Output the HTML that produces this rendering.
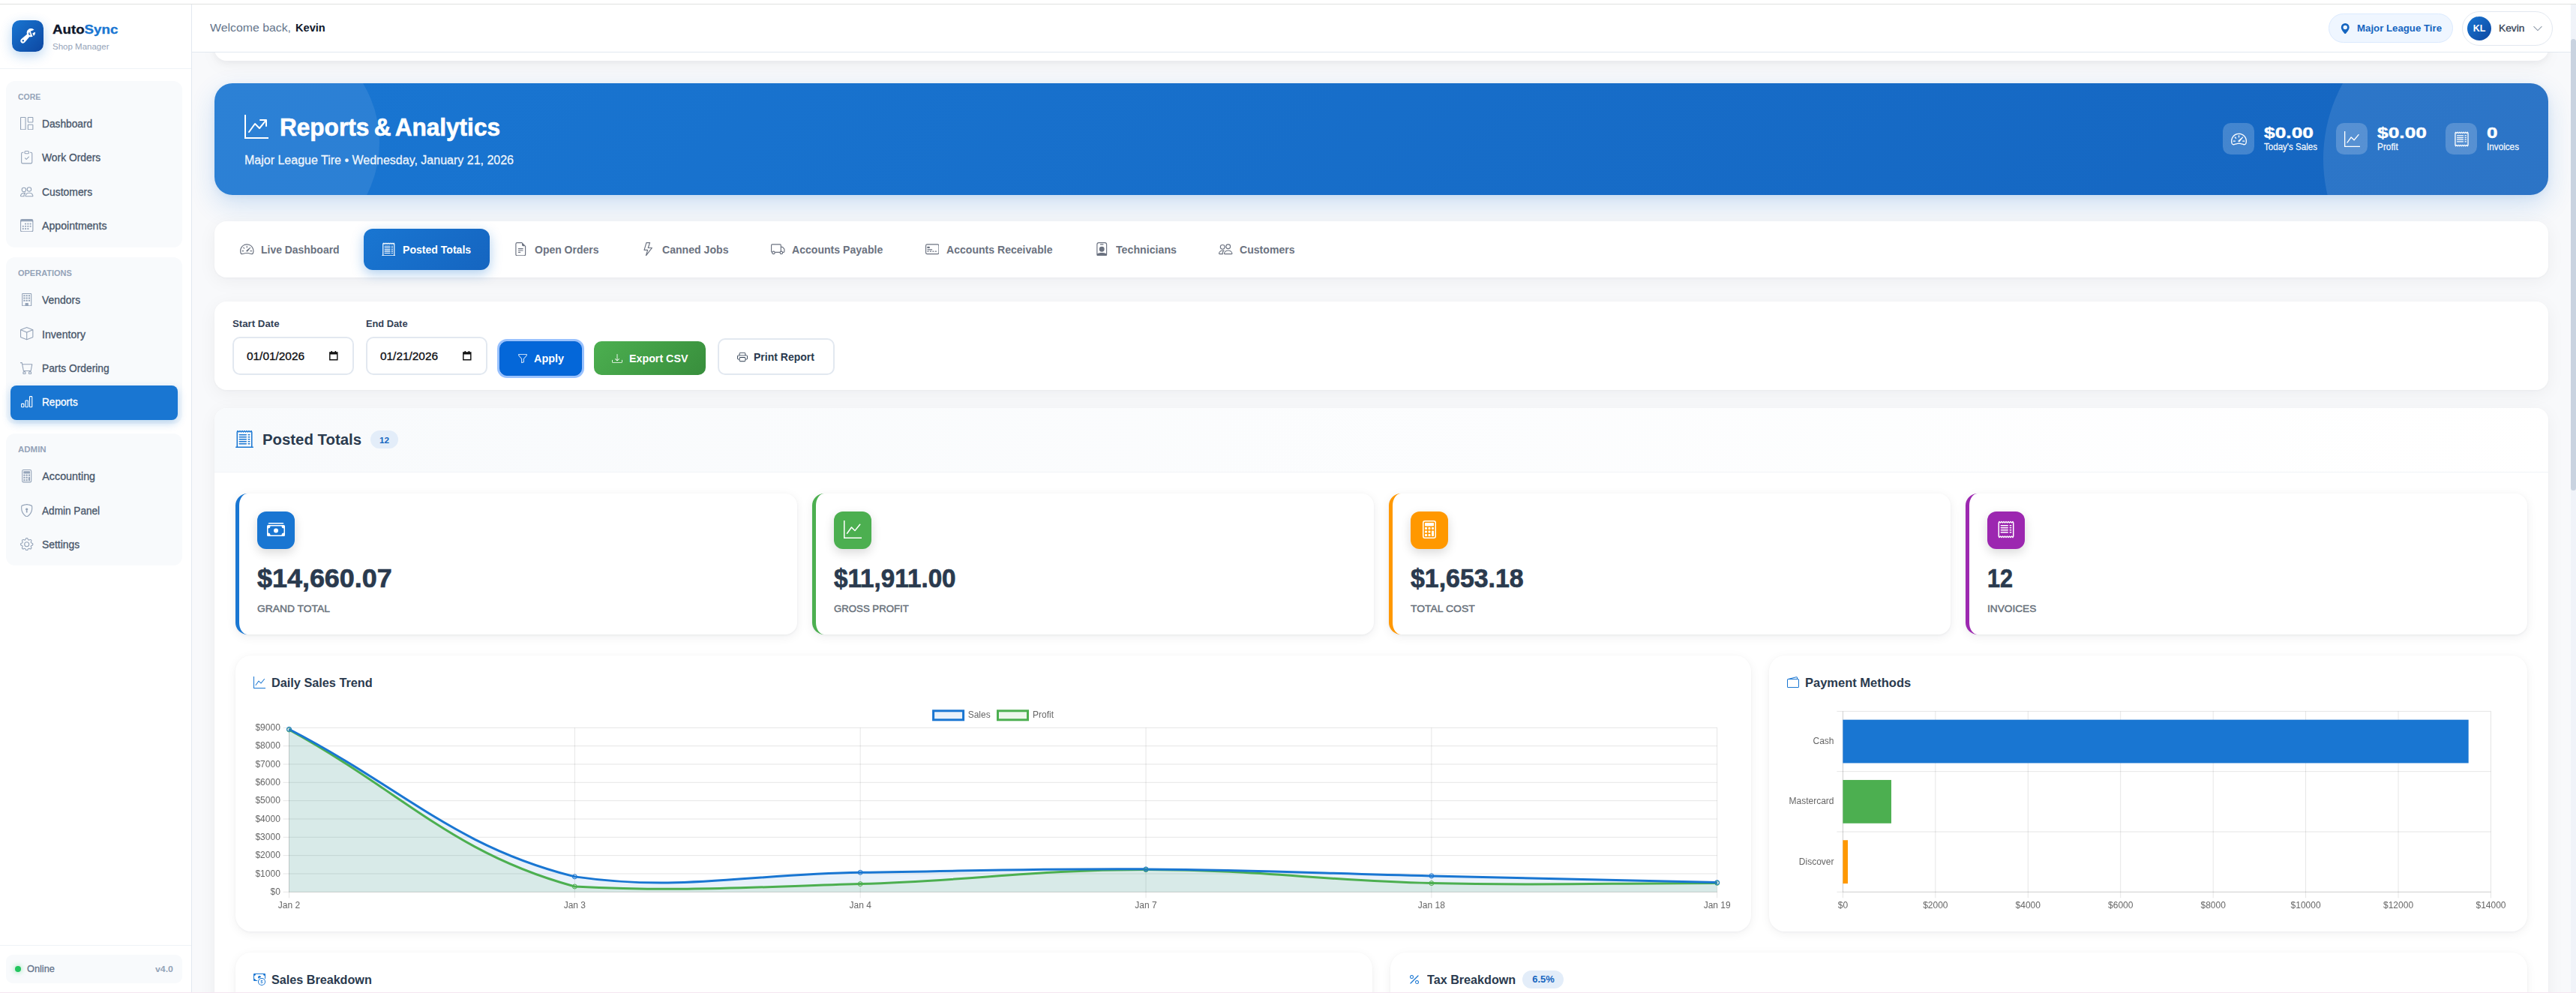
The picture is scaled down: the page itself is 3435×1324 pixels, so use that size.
<!DOCTYPE html>
<html><head><meta charset="utf-8"><title>AutoSync - Reports</title>
<style>
html,body{margin:0;padding:0;width:3435px;height:1324px;overflow:hidden}
#root{position:absolute;left:0;top:0;width:3435px;height:1324px;overflow:hidden}
body{width:3435px;height:1324px;overflow:hidden;position:relative;background:#f8f9fb;font-family:"Liberation Sans",sans-serif;}
div,svg{box-sizing:border-box}
.card{position:absolute;background:#fff;border-radius:16px;box-shadow:0 5px 24px rgba(15,23,42,.05),0 1px 3px rgba(15,23,42,.03)}
</style></head><body><div id="root">

<div style="position:absolute;left:286px;top:40px;width:3112px;height:41px;background:#fff;border-radius:0 0 16px 16px;box-shadow:0 3px 10px rgba(15,23,42,.05),0 8px 24px rgba(15,23,42,.03)"></div>
<div style="position:absolute;left:286px;top:111px;width:3112px;height:149px;border-radius:24px;background:linear-gradient(135deg,#1976d2 0%,#1565c0 100%);box-shadow:0 13px 34px rgba(25,118,210,.19),0 2px 10px rgba(25,118,210,.08);overflow:hidden">
<div style="position:absolute;left:-86px;top:-74px;width:306px;height:306px;border-radius:50%;background:rgba(255,255,255,.085)"></div>
<div style="position:absolute;left:2812px;top:-108px;width:418px;height:418px;border-radius:50%;background:rgba(255,255,255,.10)"></div>
</div>
<svg style="position:absolute;left:326px;top:153px;" width="32" height="32" viewBox="0 0 16 16" fill="#fff"><path fill-rule="evenodd" d="M0 0h1v15h15v1H0zm10 3.5a.5.5 0 0 1 .5-.5h4a.5.5 0 0 1 .5.5v4a.5.5 0 0 1-1 0V4.9l-3.613 4.417a.5.5 0 0 1-.74.037L7.06 6.767l-3.656 5.027a.5.5 0 0 1-.808-.588l4-5.5a.5.5 0 0 1 .758-.06l2.609 2.61L13.445 4H10.5a.5.5 0 0 1-.5-.5"/></svg>
<div style="position:absolute;top:152.94px;font-size:33.5px;line-height:1;font-weight:bold;color:#fff;white-space:pre;word-spacing:-2.5px;-webkit-text-stroke:0.67px currentColor;transform:scaleX(0.9420);transform-origin:0 50%;left:373px;">Reports &amp; Analytics</div>
<div style="position:absolute;top:205.66px;font-size:16px;line-height:1;font-weight:normal;color:rgba(255,255,255,.92);white-space:pre;-webkit-text-stroke:.3px currentColor;left:326px;">Major League Tire • Wednesday, January 21, 2026</div>
<div style="position:absolute;left:2964px;top:164px;width:42px;height:42px;background:rgba(255,255,255,.2);border-radius:10.5px"></div>
<svg style="position:absolute;left:2974.5px;top:174.5px;" width="21" height="21" viewBox="0 0 16 16" fill="#fff"><path d="M8 4a.5.5 0 0 1 .5.5V6a.5.5 0 0 1-1 0V4.5A.5.5 0 0 1 8 4M3.732 5.732a.5.5 0 0 1 .707 0l.915.914a.5.5 0 1 1-.708.708l-.914-.915a.5.5 0 0 1 0-.707M2 10a.5.5 0 0 1 .5-.5h1.586a.5.5 0 0 1 0 1H2.5A.5.5 0 0 1 2 10m9.5 0a.5.5 0 0 1 .5-.5h1.5a.5.5 0 0 1 0 1H12a.5.5 0 0 1-.5-.5m.754-4.246a.39.39 0 0 0-.527-.02L7.547 9.31a.91.91 0 1 0 1.302 1.258l3.434-4.297a.39.39 0 0 0-.029-.518z"/><path fill-rule="evenodd" d="M0 10a8 8 0 1 1 15.547 2.661c-.442 1.253-1.845 1.602-2.932 1.25C11.309 13.488 9.475 13 8 13c-1.474 0-3.31.488-4.615.911-1.087.352-2.49.003-2.932-1.25A8 8 0 0 1 0 10m8-7a7 7 0 0 0-6.603 9.329c.203.575.923.876 1.68.63C4.397 12.533 6.358 12 8 12s3.604.532 4.923.96c.757.245 1.477-.056 1.68-.631A7 7 0 0 0 8 3"/></svg>
<div style="position:absolute;top:166.65px;font-size:20.5px;line-height:1;font-weight:bold;color:#fff;white-space:pre;-webkit-text-stroke:0.41px currentColor;transform:scaleX(1.2864);transform-origin:0 50%;left:3018.7px;">$0.00</div>
<div style="position:absolute;top:190.34px;font-size:12px;line-height:1;font-weight:normal;color:rgba(255,255,255,.92);white-space:pre;-webkit-text-stroke:.3px currentColor;transform:scaleX(0.9636);transform-origin:0 50%;left:3018.7px;">Today's Sales</div>
<div style="position:absolute;left:3115px;top:164px;width:42px;height:42px;background:rgba(255,255,255,.2);border-radius:10.5px"></div>
<svg style="position:absolute;left:3125.5px;top:174.5px;" width="21" height="21" viewBox="0 0 16 16" fill="#fff"><path fill-rule="evenodd" d="M0 0h1v15h15v1H0zm14.817 3.113a.5.5 0 0 1 .07.704l-4.5 5.5a.5.5 0 0 1-.74.037L7.06 6.767l-3.656 5.027a.5.5 0 0 1-.808-.588l4-5.5a.5.5 0 0 1 .758-.06l2.609 2.61 4.15-5.073a.5.5 0 0 1 .704-.07"/></svg>
<div style="position:absolute;top:166.65px;font-size:20.5px;line-height:1;font-weight:bold;color:#fff;white-space:pre;-webkit-text-stroke:0.41px currentColor;transform:scaleX(1.2864);transform-origin:0 50%;left:3169.7px;">$0.00</div>
<div style="position:absolute;top:190.34px;font-size:12px;line-height:1;font-weight:normal;color:rgba(255,255,255,.92);white-space:pre;-webkit-text-stroke:.3px currentColor;transform:scaleX(0.9887);transform-origin:0 50%;left:3169.7px;">Profit</div>
<div style="position:absolute;left:3261px;top:164px;width:42px;height:42px;background:rgba(255,255,255,.2);border-radius:10.5px"></div>
<svg style="position:absolute;left:3271.5px;top:174.5px;" width="21" height="21" viewBox="0 0 16 16" fill="#fff"><path d="M1.92.506a.5.5 0 0 1 .434.14L3 1.293l.646-.647a.5.5 0 0 1 .708 0L5 1.293l.646-.647a.5.5 0 0 1 .708 0L7 1.293l.646-.647a.5.5 0 0 1 .708 0L9 1.293l.646-.647a.5.5 0 0 1 .708 0l.646.647.646-.647a.5.5 0 0 1 .708 0l.646.647.646-.647a.5.5 0 0 1 .801.13l.5 1A.5.5 0 0 1 15 2v12a.5.5 0 0 1-.053.224l-.5 1a.5.5 0 0 1-.8.13L13 14.707l-.646.647a.5.5 0 0 1-.708 0L11 14.707l-.646.647a.5.5 0 0 1-.708 0L9 14.707l-.646.647a.5.5 0 0 1-.708 0L7 14.707l-.646.647a.5.5 0 0 1-.708 0L5 14.707l-.646.647a.5.5 0 0 1-.708 0L3 14.707l-.646.647a.5.5 0 0 1-.801-.13l-.5-1A.5.5 0 0 1 1 14V2a.5.5 0 0 1 .053-.224l.5-1a.5.5 0 0 1 .367-.27m.217 1.338L2 2.118v11.764l.137.274.51-.51a.5.5 0 0 1 .707 0l.646.647.646-.646a.5.5 0 0 1 .708 0l.646.646.646-.646a.5.5 0 0 1 .708 0l.646.646.646-.646a.5.5 0 0 1 .708 0l.646.646.646-.646a.5.5 0 0 1 .708 0l.646.646.646-.646a.5.5 0 0 1 .708 0l.509.509.137-.274V2.118l-.137-.274-.51.51a.5.5 0 0 1-.707 0L12 1.707l-.646.647a.5.5 0 0 1-.708 0L10 1.707l-.646.647a.5.5 0 0 1-.708 0L8 1.707l-.646.647a.5.5 0 0 1-.708 0L6 1.707l-.646.647a.5.5 0 0 1-.708 0L4 1.707l-.646.647a.5.5 0 0 1-.708 0z"/><path d="M3 4.5a.5.5 0 0 1 .5-.5h6a.5.5 0 1 1 0 1h-6a.5.5 0 0 1-.5-.5m0 2a.5.5 0 0 1 .5-.5h6a.5.5 0 1 1 0 1h-6a.5.5 0 0 1-.5-.5m0 2a.5.5 0 0 1 .5-.5h6a.5.5 0 1 1 0 1h-6a.5.5 0 0 1-.5-.5m0 2a.5.5 0 0 1 .5-.5h6a.5.5 0 0 1 0 1h-6a.5.5 0 0 1-.5-.5m8-6a.5.5 0 0 1 .5-.5h1a.5.5 0 0 1 0 1h-1a.5.5 0 0 1-.5-.5m0 2a.5.5 0 0 1 .5-.5h1a.5.5 0 0 1 0 1h-1a.5.5 0 0 1-.5-.5m0 2a.5.5 0 0 1 .5-.5h1a.5.5 0 0 1 0 1h-1a.5.5 0 0 1-.5-.5m0 2a.5.5 0 0 1 .5-.5h1a.5.5 0 0 1 0 1h-1a.5.5 0 0 1-.5-.5"/></svg>
<div style="position:absolute;top:166.65px;font-size:20.5px;line-height:1;font-weight:bold;color:#fff;white-space:pre;-webkit-text-stroke:0.41px currentColor;transform:scaleX(1.2717);transform-origin:0 50%;left:3315.7px;">0</div>
<div style="position:absolute;top:190.34px;font-size:12px;line-height:1;font-weight:normal;color:rgba(255,255,255,.92);white-space:pre;-webkit-text-stroke:.3px currentColor;transform:scaleX(0.9766);transform-origin:0 50%;left:3315.7px;">Invoices</div>
<div class="card" style="left:286px;top:295px;width:3112px;height:75px"></div>
<div style="position:absolute;left:485px;top:305px;width:168px;height:55px;border-radius:12px;background:linear-gradient(135deg,#1976d2,#1565c0);box-shadow:0 5px 16px rgba(25,118,210,.35)"></div>
<svg style="position:absolute;left:320px;top:322.8px;" width="18.5" height="18.5" viewBox="0 0 16 16" fill="#6b7280"><path d="M8 4a.5.5 0 0 1 .5.5V6a.5.5 0 0 1-1 0V4.5A.5.5 0 0 1 8 4M3.732 5.732a.5.5 0 0 1 .707 0l.915.914a.5.5 0 1 1-.708.708l-.914-.915a.5.5 0 0 1 0-.707M2 10a.5.5 0 0 1 .5-.5h1.586a.5.5 0 0 1 0 1H2.5A.5.5 0 0 1 2 10m9.5 0a.5.5 0 0 1 .5-.5h1.5a.5.5 0 0 1 0 1H12a.5.5 0 0 1-.5-.5m.754-4.246a.39.39 0 0 0-.527-.02L7.547 9.31a.91.91 0 1 0 1.302 1.258l3.434-4.297a.39.39 0 0 0-.029-.518z"/><path fill-rule="evenodd" d="M0 10a8 8 0 1 1 15.547 2.661c-.442 1.253-1.845 1.602-2.932 1.25C11.309 13.488 9.475 13 8 13c-1.474 0-3.31.488-4.615.911-1.087.352-2.49.003-2.932-1.25A8 8 0 0 1 0 10m8-7a7 7 0 0 0-6.603 9.329c.203.575.923.876 1.68.63C4.397 12.533 6.358 12 8 12s3.604.532 4.923.96c.757.245 1.477-.056 1.68-.631A7 7 0 0 0 8 3"/></svg>
<div style="position:absolute;top:326.40px;font-size:14.3px;line-height:1;font-weight:bold;color:#6b7280;white-space:pre;transform:scaleX(0.9750);transform-origin:0 50%;left:348.4px;">Live Dashboard</div>
<svg style="position:absolute;left:508.8px;top:322.8px;" width="18.5" height="18.5" viewBox="0 0 16 16" fill="#fff"><path d="M3 4.5a.5.5 0 0 1 .5-.5h6a.5.5 0 1 1 0 1h-6a.5.5 0 0 1-.5-.5m0 2a.5.5 0 0 1 .5-.5h6a.5.5 0 1 1 0 1h-6a.5.5 0 0 1-.5-.5m0 2a.5.5 0 0 1 .5-.5h6a.5.5 0 1 1 0 1h-6a.5.5 0 0 1-.5-.5m0 2a.5.5 0 0 1 .5-.5h6a.5.5 0 0 1 0 1h-6a.5.5 0 0 1-.5-.5m0 2a.5.5 0 0 1 .5-.5h6a.5.5 0 0 1 0 1h-6a.5.5 0 0 1-.5-.5M11.5 4a.5.5 0 0 0 0 1h1a.5.5 0 0 0 0-1zm0 2a.5.5 0 0 0 0 1h1a.5.5 0 0 0 0-1zm0 2a.5.5 0 0 0 0 1h1a.5.5 0 0 0 0-1zm0 2a.5.5 0 0 0 0 1h1a.5.5 0 0 0 0-1zm0 2a.5.5 0 0 0 0 1h1a.5.5 0 0 0 0-1z"/><path d="M2.354.646a.5.5 0 0 0-.801.13l-.5 1A.5.5 0 0 0 1 2v13H.5a.5.5 0 0 0 0 1h15a.5.5 0 0 0 0-1H15V2a.5.5 0 0 0-.053-.224l-.5-1a.5.5 0 0 0-.8-.13L13 1.293l-.646-.647a.5.5 0 0 0-.708 0L11 1.293l-.646-.647a.5.5 0 0 0-.708 0L9 1.293 8.354.646a.5.5 0 0 0-.708 0L7 1.293 6.354.646a.5.5 0 0 0-.708 0L5 1.293 4.354.646a.5.5 0 0 0-.708 0L3 1.293zm-.217 1.198.51.51a.5.5 0 0 0 .707 0L4 1.707l.646.647a.5.5 0 0 0 .708 0L6 1.707l.646.647a.5.5 0 0 0 .708 0L8 1.707l.646.647a.5.5 0 0 0 .708 0L10 1.707l.646.647a.5.5 0 0 0 .708 0L12 1.707l.646.647a.5.5 0 0 0 .708 0l.509-.51.137.274V15H2V2.118z"/></svg>
<div style="position:absolute;top:326.40px;font-size:14.3px;line-height:1;font-weight:bold;color:#fff;white-space:pre;transform:scaleX(0.9838);transform-origin:0 50%;left:537.4px;">Posted Totals</div>
<svg style="position:absolute;left:684.5px;top:322.8px;" width="18.5" height="18.5" viewBox="0 0 16 16" fill="#6b7280"><path d="M5.5 7a.5.5 0 0 0 0 1h5a.5.5 0 0 0 0-1zM5 9.5a.5.5 0 0 1 .5-.5h5a.5.5 0 0 1 0 1h-5a.5.5 0 0 1-.5-.5m0 2a.5.5 0 0 1 .5-.5h2a.5.5 0 0 1 0 1h-2a.5.5 0 0 1-.5-.5"/><path d="M9.5 0H4a2 2 0 0 0-2 2v12a2 2 0 0 0 2 2h8a2 2 0 0 0 2-2V4.5zm0 1v2A1.5 1.5 0 0 0 11 4.5h2V14a1 1 0 0 1-1 1H4a1 1 0 0 1-1-1V2a1 1 0 0 1 1-1z"/></svg>
<div style="position:absolute;top:326.40px;font-size:14.3px;line-height:1;font-weight:bold;color:#6b7280;white-space:pre;transform:scaleX(0.9780);transform-origin:0 50%;left:713px;">Open Orders</div>
<svg style="position:absolute;left:855px;top:322.8px;" width="18.5" height="18.5" viewBox="0 0 16 16" fill="#6b7280"><path d="M5.52.359A.5.5 0 0 1 6 0h4a.5.5 0 0 1 .474.658L8.694 6H12.5a.5.5 0 0 1 .395.807l-7 9a.5.5 0 0 1-.873-.454L6.823 9.5H3.5a.5.5 0 0 1-.48-.641zM6.374 1 4.168 8.5H7.5a.5.5 0 0 1 .478.647L6.78 13.04 11.478 7H8a.5.5 0 0 1-.474-.658L9.306 1z"/></svg>
<div style="position:absolute;top:326.40px;font-size:14.3px;line-height:1;font-weight:bold;color:#6b7280;white-space:pre;transform:scaleX(0.9857);transform-origin:0 50%;left:883px;">Canned Jobs</div>
<svg style="position:absolute;left:1028px;top:322.8px;" width="18.5" height="18.5" viewBox="0 0 16 16" fill="#6b7280"><path d="M0 3.5A1.5 1.5 0 0 1 1.5 2h9A1.5 1.5 0 0 1 12 3.5V5h1.02a1.5 1.5 0 0 1 1.17.563l1.481 1.85a1.5 1.5 0 0 1 .329.938V10.5a1.5 1.5 0 0 1-1.5 1.5H14a2 2 0 1 1-4 0H5a2 2 0 1 1-3.998-.085A1.5 1.5 0 0 1 0 10.5zm1.294 7.456A2 2 0 0 1 4.732 11h5.536a2 2 0 0 1 .732-.732V3.5a.5.5 0 0 0-.5-.5h-9a.5.5 0 0 0-.5.5v7a.5.5 0 0 0 .294.456M12 10a2 2 0 0 1 1.732 1h.768a.5.5 0 0 0 .5-.5V8.35a.5.5 0 0 0-.11-.312l-1.48-1.85A.5.5 0 0 0 13.02 6H12zm-9 1a1 1 0 1 0 0 2 1 1 0 0 0 0-2m9 0a1 1 0 1 0 0 2 1 1 0 0 0 0-2"/></svg>
<div style="position:absolute;top:326.40px;font-size:14.3px;line-height:1;font-weight:bold;color:#6b7280;white-space:pre;transform:scaleX(0.9847);transform-origin:0 50%;left:1056px;">Accounts Payable</div>
<svg style="position:absolute;left:1233.5px;top:322.8px;" width="18.5" height="18.5" viewBox="0 0 16 16" fill="#6b7280"><path d="M14 3a1 1 0 0 1 1 1v8a1 1 0 0 1-1 1H2a1 1 0 0 1-1-1V4a1 1 0 0 1 1-1zM2 2a2 2 0 0 0-2 2v8a2 2 0 0 0 2 2h12a2 2 0 0 0 2-2V4a2 2 0 0 0-2-2z"/><path d="M2 5.5a.5.5 0 0 1 .5-.5h2a.5.5 0 0 1 .5.5v1a.5.5 0 0 1-.5.5h-2a.5.5 0 0 1-.5-.5zm0 3a.5.5 0 0 1 .5-.5h5a.5.5 0 0 1 0 1h-5a.5.5 0 0 1-.5-.5m0 2a.5.5 0 0 1 .5-.5h1a.5.5 0 0 1 0 1h-1a.5.5 0 0 1-.5-.5m3 0a.5.5 0 0 1 .5-.5h1a.5.5 0 0 1 0 1h-1a.5.5 0 0 1-.5-.5m3 0a.5.5 0 0 1 .5-.5h1a.5.5 0 0 1 0 1h-1a.5.5 0 0 1-.5-.5m3 0a.5.5 0 0 1 .5-.5h1a.5.5 0 0 1 0 1h-1a.5.5 0 0 1-.5-.5"/></svg>
<div style="position:absolute;top:326.40px;font-size:14.3px;line-height:1;font-weight:bold;color:#6b7280;white-space:pre;transform:scaleX(0.9836);transform-origin:0 50%;left:1261.8px;">Accounts Receivable</div>
<svg style="position:absolute;left:1460px;top:322.8px;" width="18.5" height="18.5" viewBox="0 0 16 16" fill="#6b7280"><path d="M6.5 2a.5.5 0 0 0 0 1h3a.5.5 0 0 0 0-1zM11 8a3 3 0 1 1-6 0 3 3 0 0 1 6 0"/><path d="M4.5 0A2.5 2.5 0 0 0 2 2.5V14a2 2 0 0 0 2 2h8a2 2 0 0 0 2-2V2.5A2.5 2.5 0 0 0 11.5 0zM3 2.5A1.5 1.5 0 0 1 4.5 1h7A1.5 1.5 0 0 1 13 2.5v10.795a4.2 4.2 0 0 0-.776-.492C11.392 12.387 10.063 12 8 12s-3.392.387-4.224.803a4.2 4.2 0 0 0-.776.492z"/></svg>
<div style="position:absolute;top:326.40px;font-size:14.3px;line-height:1;font-weight:bold;color:#6b7280;white-space:pre;transform:scaleX(0.9928);transform-origin:0 50%;left:1488px;">Technicians</div>
<svg style="position:absolute;left:1625px;top:322.8px;" width="18.5" height="18.5" viewBox="0 0 16 16" fill="#6b7280"><path d="M15 14s1 0 1-1-1-4-5-4-5 3-5 4 1 1 1 1zm-7.978-1L7 12.996c.001-.264.167-1.03.76-1.72C8.312 10.629 9.282 10 11 10c1.717 0 2.687.63 3.24 1.276.593.69.758 1.457.76 1.72l-.008.002-.014.002zM11 7a2 2 0 1 0 0-4 2 2 0 0 0 0 4m3-2a3 3 0 1 1-6 0 3 3 0 0 1 6 0M6.936 9.28a6 6 0 0 0-1.23-.247A7 7 0 0 0 5 9c-4 0-5 3-5 4q0 1 1 1h4.216A2.24 2.24 0 0 1 5 13c0-1.01.377-2.042 1.09-2.904.243-.294.526-.569.846-.816M4.92 10A5.5 5.5 0 0 0 4 13H1c0-.26.164-1.03.76-1.724.545-.636 1.492-1.256 3.16-1.275ZM1.5 5.5a3 3 0 1 1 6 0 3 3 0 0 1-6 0m3-2a2 2 0 1 0 0 4 2 2 0 0 0 0-4"/></svg>
<div style="position:absolute;top:326.40px;font-size:14.3px;line-height:1;font-weight:bold;color:#6b7280;white-space:pre;transform:scaleX(0.9853);transform-origin:0 50%;left:1653.4px;">Customers</div>
<div class="card" style="left:286px;top:402px;width:3112px;height:118px"></div>
<div style="position:absolute;top:424.87px;font-size:13.5px;line-height:1;font-weight:bold;color:#334155;white-space:pre;transform:scaleX(0.9801);transform-origin:0 50%;left:310px;">Start Date</div>
<div style="position:absolute;top:424.87px;font-size:13.5px;line-height:1;font-weight:bold;color:#334155;white-space:pre;transform:scaleX(0.9486);transform-origin:0 50%;left:488.3px;">End Date</div>
<div style="position:absolute;left:310px;top:449.2px;width:162px;height:50.4px;background:#fff;border:2px solid #e2e8f0;border-radius:10px"></div>
<div style="position:absolute;top:468.03px;font-size:14.5px;line-height:1;font-weight:normal;color:#0c0d10;white-space:pre;-webkit-text-stroke:.3px currentColor;transform:scaleX(1.0613);transform-origin:0 50%;left:329px;">01/01/2026</div>
<svg style="position:absolute;left:439px;top:468.2px" width="11.6" height="12.4" viewBox="0 0 12 13"><path d="M2.5 0h1.6v1.3h3.8V0h1.6v1.3H12V13H0V1.3h2.5z M1.5 4.6v6.9h9V4.6z" fill="#111" fill-rule="evenodd"/></svg>
<div style="position:absolute;left:488.3px;top:449.2px;width:162px;height:50.4px;background:#fff;border:2px solid #e2e8f0;border-radius:10px"></div>
<div style="position:absolute;top:468.03px;font-size:14.5px;line-height:1;font-weight:normal;color:#0c0d10;white-space:pre;-webkit-text-stroke:.3px currentColor;transform:scaleX(1.0613);transform-origin:0 50%;left:507.3px;">01/21/2026</div>
<svg style="position:absolute;left:617.3px;top:468.2px" width="11.6" height="12.4" viewBox="0 0 12 13"><path d="M2.5 0h1.6v1.3h3.8V0h1.6v1.3H12V13H0V1.3h2.5z M1.5 4.6v6.9h9V4.6z" fill="#111" fill-rule="evenodd"/></svg>
<div style="position:absolute;left:665.8px;top:455px;width:110.5px;height:45.5px;background:#0467d9;border:1px solid #0462d0;border-radius:10px;box-shadow:0 0 0 3px rgba(49,132,253,.5)"></div>
<svg style="position:absolute;left:690px;top:471px;" width="14" height="14" viewBox="0 0 16 16" fill="#fff"><path d="M1.5 1.5A.5.5 0 0 1 2 1h12a.5.5 0 0 1 .5.5v2a.5.5 0 0 1-.128.334L10 8.692V13.5a.5.5 0 0 1-.342.474l-3 1A.5.5 0 0 1 6 14.5V8.692L1.628 3.834A.5.5 0 0 1 1.5 3.5zm1 .5v1.308l4.372 4.858A.5.5 0 0 1 7 8.5v5.306l2-.666V8.5a.5.5 0 0 1 .128-.334L13.5 3.308V2z"/></svg>
<div style="position:absolute;top:471.48px;font-size:14.2px;line-height:1;font-weight:bold;color:#fff;white-space:pre;transform:scaleX(1.0141);transform-origin:0 50%;left:712.4px;">Apply</div>
<div style="position:absolute;left:792px;top:455px;width:149px;height:45px;background:linear-gradient(135deg,#4caf50,#388e3c);border-radius:10px"></div>
<svg style="position:absolute;left:816px;top:470.5px;" width="14" height="14" viewBox="0 0 16 16" fill="#fff"><path d="M.5 9.9a.5.5 0 0 1 .5.5v2.5a1 1 0 0 0 1 1h12a1 1 0 0 0 1-1v-2.5a.5.5 0 0 1 1 0v2.5a2 2 0 0 1-2 2H2a2 2 0 0 1-2-2v-2.5a.5.5 0 0 1 .5-.5"/><path d="M7.646 11.854a.5.5 0 0 0 .708 0l3-3a.5.5 0 0 0-.708-.708L8.5 10.293V1.5a.5.5 0 0 0-1 0v8.793L5.354 8.146a.5.5 0 1 0-.708.708z"/></svg>
<div style="position:absolute;top:471.48px;font-size:14.2px;line-height:1;font-weight:bold;color:#fff;white-space:pre;transform:scaleX(1.0050);transform-origin:0 50%;left:838.6px;">Export CSV</div>
<div style="position:absolute;left:957px;top:451px;width:155.5px;height:48.5px;background:#fff;border:2px solid #e2e8f0;border-radius:10px"></div>
<svg style="position:absolute;left:983px;top:468.8px;" width="14" height="14" viewBox="0 0 16 16" fill="#2a3a4e"><path d="M2.5 8a.5.5 0 1 0 0-1 .5.5 0 0 0 0 1"/><path d="M5 1a2 2 0 0 0-2 2v2H2a2 2 0 0 0-2 2v3a2 2 0 0 0 2 2h1v1a2 2 0 0 0 2 2h6a2 2 0 0 0 2-2v-1h1a2 2 0 0 0 2-2V7a2 2 0 0 0-2-2h-1V3a2 2 0 0 0-2-2zM4 3a1 1 0 0 1 1-1h6a1 1 0 0 1 1 1v2H4zm1 5a2 2 0 0 0-2 2v1H2a1 1 0 0 1-1-1V7a1 1 0 0 1 1-1h12a1 1 0 0 1 1 1v3a1 1 0 0 1-1 1h-1v-1a2 2 0 0 0-2-2zm7 2v3a1 1 0 0 1-1 1H5a1 1 0 0 1-1-1v-3a1 1 0 0 1 1-1h6a1 1 0 0 1 1 1"/></svg>
<div style="position:absolute;top:468.98px;font-size:14.2px;line-height:1;font-weight:bold;color:#2a3a4e;white-space:pre;transform:scaleX(0.9872);transform-origin:0 50%;left:1005.2px;">Print Report</div>
<div class="card" style="left:286px;top:544px;width:3112px;height:900px;overflow:hidden"><div style="position:absolute;left:0;top:0;right:0;height:86px;background:linear-gradient(100deg,#f8fafc 0%,#ffffff 100%);border-bottom:1px solid #f1f4f8"></div></div>
<svg style="position:absolute;left:314px;top:572.7px;" width="24" height="24" viewBox="0 0 16 16" fill="#1976d2"><path d="M3 4.5a.5.5 0 0 1 .5-.5h6a.5.5 0 1 1 0 1h-6a.5.5 0 0 1-.5-.5m0 2a.5.5 0 0 1 .5-.5h6a.5.5 0 1 1 0 1h-6a.5.5 0 0 1-.5-.5m0 2a.5.5 0 0 1 .5-.5h6a.5.5 0 1 1 0 1h-6a.5.5 0 0 1-.5-.5m0 2a.5.5 0 0 1 .5-.5h6a.5.5 0 0 1 0 1h-6a.5.5 0 0 1-.5-.5m0 2a.5.5 0 0 1 .5-.5h6a.5.5 0 0 1 0 1h-6a.5.5 0 0 1-.5-.5M11.5 4a.5.5 0 0 0 0 1h1a.5.5 0 0 0 0-1zm0 2a.5.5 0 0 0 0 1h1a.5.5 0 0 0 0-1zm0 2a.5.5 0 0 0 0 1h1a.5.5 0 0 0 0-1zm0 2a.5.5 0 0 0 0 1h1a.5.5 0 0 0 0-1zm0 2a.5.5 0 0 0 0 1h1a.5.5 0 0 0 0-1z"/><path d="M2.354.646a.5.5 0 0 0-.801.13l-.5 1A.5.5 0 0 0 1 2v13H.5a.5.5 0 0 0 0 1h15a.5.5 0 0 0 0-1H15V2a.5.5 0 0 0-.053-.224l-.5-1a.5.5 0 0 0-.8-.13L13 1.293l-.646-.647a.5.5 0 0 0-.708 0L11 1.293l-.646-.647a.5.5 0 0 0-.708 0L9 1.293 8.354.646a.5.5 0 0 0-.708 0L7 1.293 6.354.646a.5.5 0 0 0-.708 0L5 1.293 4.354.646a.5.5 0 0 0-.708 0L3 1.293zm-.217 1.198.51.51a.5.5 0 0 0 .707 0L4 1.707l.646.647a.5.5 0 0 0 .708 0L6 1.707l.646.647a.5.5 0 0 0 .708 0L8 1.707l.646.647a.5.5 0 0 0 .708 0L10 1.707l.646.647a.5.5 0 0 0 .708 0L12 1.707l.646.647a.5.5 0 0 0 .708 0l.509-.51.137.274V15H2V2.118z"/></svg>
<div style="position:absolute;top:576.47px;font-size:20px;line-height:1;font-weight:bold;color:#2a3a4e;white-space:pre;transform:scaleX(1.0180);transform-origin:0 50%;left:350px;">Posted Totals</div>
<div style="position:absolute;left:494px;top:573.5px;width:37px;height:24.5px;background:#e3edf9;border-radius:13px"></div>
<div style="position:absolute;top:580.50px;font-size:11.7px;line-height:1;font-weight:bold;color:#1565c0;white-space:pre;left:-487.50px;width:2000px;text-align:center;">12</div>
<div style="position:absolute;left:314px;top:658px;width:749px;height:188px;border-radius:16px;background:#fff;border-left:5px solid #1976d2;box-shadow:0 3px 14px rgba(15,23,42,.07),0 1px 3px rgba(15,23,42,.05)"></div>
<div style="position:absolute;left:343px;top:682px;width:50px;height:50px;background:#1976d2;border-radius:12px;box-shadow:0 5px 14px rgba(0,0,0,.15)"></div>
<svg style="position:absolute;left:356px;top:694.3px;" width="24" height="24" viewBox="0 0 16 16" fill="#fff"><path d="M1 3a1 1 0 0 1 1-1h12a1 1 0 0 1 1 1zm7 8a2 2 0 1 0 0-4 2 2 0 0 0 0 4"/><path d="M0 5a1 1 0 0 1 1-1h14a1 1 0 0 1 1 1v8a1 1 0 0 1-1 1H1a1 1 0 0 1-1-1zm3 0a2 2 0 0 1-2 2v4a2 2 0 0 1 2 2h10a2 2 0 0 1 2-2V7a2 2 0 0 1-2-2z"/></svg>
<div style="position:absolute;top:753.60px;font-size:34.5px;line-height:1;font-weight:bold;color:#2a3a4e;white-space:pre;-webkit-text-stroke:0.69px currentColor;transform:scaleX(1.0407);transform-origin:0 50%;left:343.3px;">$14,660.07</div>
<div style="position:absolute;top:804.74px;font-size:13.3px;line-height:1;font-weight:normal;color:#68717b;white-space:pre;-webkit-text-stroke:.45px currentColor;transform:scaleX(1.0417);transform-origin:0 50%;left:343.3px;">GRAND TOTAL</div>
<div style="position:absolute;left:1083px;top:658px;width:749px;height:188px;border-radius:16px;background:#fff;border-left:5px solid #4caf50;box-shadow:0 3px 14px rgba(15,23,42,.07),0 1px 3px rgba(15,23,42,.05)"></div>
<div style="position:absolute;left:1112px;top:682px;width:50px;height:50px;background:#4caf50;border-radius:12px;box-shadow:0 5px 14px rgba(0,0,0,.15)"></div>
<svg style="position:absolute;left:1125px;top:694.3px;" width="24" height="24" viewBox="0 0 16 16" fill="#fff"><path fill-rule="evenodd" d="M0 0h1v15h15v1H0zm14.817 3.113a.5.5 0 0 1 .07.704l-4.5 5.5a.5.5 0 0 1-.74.037L7.06 6.767l-3.656 5.027a.5.5 0 0 1-.808-.588l4-5.5a.5.5 0 0 1 .758-.06l2.609 2.61 4.15-5.073a.5.5 0 0 1 .704-.07"/></svg>
<div style="position:absolute;top:753.60px;font-size:34.5px;line-height:1;font-weight:bold;color:#2a3a4e;white-space:pre;-webkit-text-stroke:0.69px currentColor;transform:scaleX(0.9629);transform-origin:0 50%;left:1112.3px;">$11,911.00</div>
<div style="position:absolute;top:804.74px;font-size:13.3px;line-height:1;font-weight:normal;color:#68717b;white-space:pre;-webkit-text-stroke:.45px currentColor;transform:scaleX(0.9932);transform-origin:0 50%;left:1112.3px;">GROSS PROFIT</div>
<div style="position:absolute;left:1852px;top:658px;width:749px;height:188px;border-radius:16px;background:#fff;border-left:5px solid #ff9800;box-shadow:0 3px 14px rgba(15,23,42,.07),0 1px 3px rgba(15,23,42,.05)"></div>
<div style="position:absolute;left:1881px;top:682px;width:50px;height:50px;background:#ff9800;border-radius:12px;box-shadow:0 5px 14px rgba(0,0,0,.15)"></div>
<svg style="position:absolute;left:1894px;top:694.3px;" width="24" height="24" viewBox="0 0 16 16" fill="#fff"><path d="M12 1a1 1 0 0 1 1 1v12a1 1 0 0 1-1 1H4a1 1 0 0 1-1-1V2a1 1 0 0 1 1-1zM4 0a2 2 0 0 0-2 2v12a2 2 0 0 0 2 2h8a2 2 0 0 0 2-2V2a2 2 0 0 0-2-2z"/><path d="M4 2.5a.5.5 0 0 1 .5-.5h7a.5.5 0 0 1 .5.5v2a.5.5 0 0 1-.5.5h-7a.5.5 0 0 1-.5-.5zm0 4a.5.5 0 0 1 .5-.5h1a.5.5 0 0 1 .5.5v1a.5.5 0 0 1-.5.5h-1a.5.5 0 0 1-.5-.5zm0 3a.5.5 0 0 1 .5-.5h1a.5.5 0 0 1 .5.5v1a.5.5 0 0 1-.5.5h-1a.5.5 0 0 1-.5-.5zm0 3a.5.5 0 0 1 .5-.5h1a.5.5 0 0 1 .5.5v1a.5.5 0 0 1-.5.5h-1a.5.5 0 0 1-.5-.5zm3-6a.5.5 0 0 1 .5-.5h1a.5.5 0 0 1 .5.5v1a.5.5 0 0 1-.5.5h-1a.5.5 0 0 1-.5-.5zm0 3a.5.5 0 0 1 .5-.5h1a.5.5 0 0 1 .5.5v1a.5.5 0 0 1-.5.5h-1a.5.5 0 0 1-.5-.5zm0 3a.5.5 0 0 1 .5-.5h1a.5.5 0 0 1 .5.5v1a.5.5 0 0 1-.5.5h-1a.5.5 0 0 1-.5-.5zm3-6a.5.5 0 0 1 .5-.5h1a.5.5 0 0 1 .5.5v1a.5.5 0 0 1-.5.5h-1a.5.5 0 0 1-.5-.5zm0 3a.5.5 0 0 1 .5-.5h1a.5.5 0 0 1 .5.5v4a.5.5 0 0 1-.5.5h-1a.5.5 0 0 1-.5-.5z"/></svg>
<div style="position:absolute;top:753.60px;font-size:34.5px;line-height:1;font-weight:bold;color:#2a3a4e;white-space:pre;-webkit-text-stroke:0.69px currentColor;transform:scaleX(0.9819);transform-origin:0 50%;left:1881.3px;">$1,653.18</div>
<div style="position:absolute;top:804.74px;font-size:13.3px;line-height:1;font-weight:normal;color:#68717b;white-space:pre;-webkit-text-stroke:.45px currentColor;transform:scaleX(1.0480);transform-origin:0 50%;left:1881.3px;">TOTAL COST</div>
<div style="position:absolute;left:2621px;top:658px;width:749px;height:188px;border-radius:16px;background:#fff;border-left:5px solid #9c27b0;box-shadow:0 3px 14px rgba(15,23,42,.07),0 1px 3px rgba(15,23,42,.05)"></div>
<div style="position:absolute;left:2650px;top:682px;width:50px;height:50px;background:#9c27b0;border-radius:12px;box-shadow:0 5px 14px rgba(0,0,0,.15)"></div>
<svg style="position:absolute;left:2663px;top:694.3px;" width="24" height="24" viewBox="0 0 16 16" fill="#fff"><path d="M1.92.506a.5.5 0 0 1 .434.14L3 1.293l.646-.647a.5.5 0 0 1 .708 0L5 1.293l.646-.647a.5.5 0 0 1 .708 0L7 1.293l.646-.647a.5.5 0 0 1 .708 0L9 1.293l.646-.647a.5.5 0 0 1 .708 0l.646.647.646-.647a.5.5 0 0 1 .708 0l.646.647.646-.647a.5.5 0 0 1 .801.13l.5 1A.5.5 0 0 1 15 2v12a.5.5 0 0 1-.053.224l-.5 1a.5.5 0 0 1-.8.13L13 14.707l-.646.647a.5.5 0 0 1-.708 0L11 14.707l-.646.647a.5.5 0 0 1-.708 0L9 14.707l-.646.647a.5.5 0 0 1-.708 0L7 14.707l-.646.647a.5.5 0 0 1-.708 0L5 14.707l-.646.647a.5.5 0 0 1-.708 0L3 14.707l-.646.647a.5.5 0 0 1-.801-.13l-.5-1A.5.5 0 0 1 1 14V2a.5.5 0 0 1 .053-.224l.5-1a.5.5 0 0 1 .367-.27m.217 1.338L2 2.118v11.764l.137.274.51-.51a.5.5 0 0 1 .707 0l.646.647.646-.646a.5.5 0 0 1 .708 0l.646.646.646-.646a.5.5 0 0 1 .708 0l.646.646.646-.646a.5.5 0 0 1 .708 0l.646.646.646-.646a.5.5 0 0 1 .708 0l.646.646.646-.646a.5.5 0 0 1 .708 0l.509.509.137-.274V2.118l-.137-.274-.51.51a.5.5 0 0 1-.707 0L12 1.707l-.646.647a.5.5 0 0 1-.708 0L10 1.707l-.646.647a.5.5 0 0 1-.708 0L8 1.707l-.646.647a.5.5 0 0 1-.708 0L6 1.707l-.646.647a.5.5 0 0 1-.708 0L4 1.707l-.646.647a.5.5 0 0 1-.708 0z"/><path d="M3 4.5a.5.5 0 0 1 .5-.5h6a.5.5 0 1 1 0 1h-6a.5.5 0 0 1-.5-.5m0 2a.5.5 0 0 1 .5-.5h6a.5.5 0 1 1 0 1h-6a.5.5 0 0 1-.5-.5m0 2a.5.5 0 0 1 .5-.5h6a.5.5 0 1 1 0 1h-6a.5.5 0 0 1-.5-.5m0 2a.5.5 0 0 1 .5-.5h6a.5.5 0 0 1 0 1h-6a.5.5 0 0 1-.5-.5m8-6a.5.5 0 0 1 .5-.5h1a.5.5 0 0 1 0 1h-1a.5.5 0 0 1-.5-.5m0 2a.5.5 0 0 1 .5-.5h1a.5.5 0 0 1 0 1h-1a.5.5 0 0 1-.5-.5m0 2a.5.5 0 0 1 .5-.5h1a.5.5 0 0 1 0 1h-1a.5.5 0 0 1-.5-.5m0 2a.5.5 0 0 1 .5-.5h1a.5.5 0 0 1 0 1h-1a.5.5 0 0 1-.5-.5"/></svg>
<div style="position:absolute;top:753.60px;font-size:34.5px;line-height:1;font-weight:bold;color:#2a3a4e;white-space:pre;-webkit-text-stroke:0.69px currentColor;transform:scaleX(0.8860);transform-origin:0 50%;left:2650.3px;">12</div>
<div style="position:absolute;top:804.74px;font-size:13.3px;line-height:1;font-weight:normal;color:#68717b;white-space:pre;-webkit-text-stroke:.45px currentColor;transform:scaleX(1.0275);transform-origin:0 50%;left:2650.3px;">INVOICES</div>
<div style="position:absolute;left:314px;top:874px;width:2021px;height:368px;background:#fff;border-radius:21px;box-shadow:0 3px 14px rgba(15,23,42,.06),0 1px 3px rgba(15,23,42,.04)"></div>
<div style="position:absolute;left:2359px;top:874px;width:1011px;height:368px;background:#fff;border-radius:21px;box-shadow:0 3px 14px rgba(15,23,42,.06),0 1px 3px rgba(15,23,42,.04)"></div>
<div style="position:absolute;left:314px;top:1269.6px;width:1516px;height:200px;background:#fff;border-radius:21px;box-shadow:0 3px 14px rgba(15,23,42,.06),0 1px 3px rgba(15,23,42,.04)"></div>
<div style="position:absolute;left:1854px;top:1269.6px;width:1516px;height:200px;background:#fff;border-radius:21px;box-shadow:0 3px 14px rgba(15,23,42,.06),0 1px 3px rgba(15,23,42,.04)"></div>
<svg style="position:absolute;left:337.8px;top:902px;" width="16" height="16" viewBox="0 0 16 16" fill="#1976d2"><path fill-rule="evenodd" d="M0 0h1v15h15v1H0zm14.817 3.113a.5.5 0 0 1 .07.704l-4.5 5.5a.5.5 0 0 1-.74.037L7.06 6.767l-3.656 5.027a.5.5 0 0 1-.808-.588l4-5.5a.5.5 0 0 1 .758-.06l2.609 2.61 4.15-5.073a.5.5 0 0 1 .704-.07"/></svg>
<div style="position:absolute;top:901.83px;font-size:16.5px;line-height:1;font-weight:bold;color:#2a3a4e;white-space:pre;transform:scaleX(0.9857);transform-origin:0 50%;left:362px;">Daily Sales Trend</div>
<svg style="position:absolute;left:2382.8px;top:902px;" width="16" height="16" viewBox="0 0 16 16" fill="#1976d2"><path d="M12.136.326A1.5 1.5 0 0 1 14 1.78V3h.5A1.5 1.5 0 0 1 16 4.5v9a1.5 1.5 0 0 1-1.5 1.5h-13A1.5 1.5 0 0 1 0 13.5v-9a1.5 1.5 0 0 1 1.432-1.499zM5.562 3H13V1.78a.5.5 0 0 0-.621-.484zM1.5 4a.5.5 0 0 0-.5.5v9a.5.5 0 0 0 .5.5h13a.5.5 0 0 0 .5-.5v-9a.5.5 0 0 0-.5-.5z"/></svg>
<div style="position:absolute;top:901.83px;font-size:16.5px;line-height:1;font-weight:bold;color:#2a3a4e;white-space:pre;left:2407px;">Payment Methods</div>
<svg style="position:absolute;left:338px;top:1297.6px;" width="16" height="16" viewBox="0 0 16 16" fill="#1976d2"><path fill-rule="evenodd" d="M11 15a4 4 0 1 0 0-8 4 4 0 0 0 0 8m5-4a5 5 0 1 1-10 0 5 5 0 0 1 10 0"/><path d="M9.438 11.944c.047.596.518 1.06 1.363 1.116v.44h.375v-.443c.875-.061 1.386-.529 1.386-1.207 0-.618-.39-.936-1.09-1.1l-.296-.07v-1.2c.376.043.614.248.671.532h.658c-.047-.575-.54-1.024-1.329-1.073V8.5h-.375v.45c-.747.073-1.255.522-1.255 1.158 0 .562.378.92 1.007 1.066l.248.061v1.272c-.384-.058-.639-.27-.696-.563h-.668zm1.36-1.354c-.369-.085-.569-.26-.569-.522 0-.294.216-.514.572-.578v1.1zm.432.746c.449.104.655.272.655.569 0 .339-.257.571-.709.614v-1.195z"/><path d="M1 0a1 1 0 0 0-1 1v8a1 1 0 0 0 1 1h4.083q.088-.517.258-1H3a2 2 0 0 0-2-2V3a2 2 0 0 0 2-2h10a2 2 0 0 0 2 2v3.528c.38.34.717.728 1 1.154V1a1 1 0 0 0-1-1z"/><path d="M9.998 5.083 10 5a2 2 0 1 0-3.132 1.65 6 6 0 0 1 3.13-1.567"/></svg>
<div style="position:absolute;top:1298.33px;font-size:16.5px;line-height:1;font-weight:bold;color:#2a3a4e;white-space:pre;transform:scaleX(0.9792);transform-origin:0 50%;left:362px;">Sales Breakdown</div>
<svg style="position:absolute;left:1878px;top:1297.6px;" width="16" height="16" viewBox="0 0 16 16" fill="#1976d2"><path d="M13.442 2.558a.625.625 0 0 1 0 .884l-10 10a.625.625 0 1 1-.884-.884l10-10a.625.625 0 0 1 .884 0M4.5 6a1.5 1.5 0 1 1 0-3 1.5 1.5 0 0 1 0 3m0 1a2.5 2.5 0 1 0 0-5 2.5 2.5 0 0 0 0 5m7 6a1.5 1.5 0 1 1 0-3 1.5 1.5 0 0 1 0 3m0 1a2.5 2.5 0 1 0 0-5 2.5 2.5 0 0 0 0 5"/></svg>
<div style="position:absolute;top:1298.33px;font-size:16.5px;line-height:1;font-weight:bold;color:#2a3a4e;white-space:pre;transform:scaleX(0.9791);transform-origin:0 50%;left:1902.8px;">Tax Breakdown</div>
<div style="position:absolute;left:2030px;top:1293.8px;width:55px;height:24px;background:#e3edf9;border-radius:12px"></div>
<div style="position:absolute;top:1299.90px;font-size:12.4px;line-height:1;font-weight:bold;color:#1565c0;white-space:pre;transform:scaleX(1.0437);transform-origin:50% 50%;left:1057.50px;width:2000px;text-align:center;">6.5%</div>
<svg style="position:absolute;left:0;top:0" width="3435" height="1324" viewBox="0 0 3435 1324"><line x1="377.5" y1="1189.30" x2="2289.7" y2="1189.30" stroke="rgba(0,0,0,.1)" stroke-width="1.0"/><line x1="377.5" y1="1164.97" x2="2289.7" y2="1164.97" stroke="rgba(0,0,0,.1)" stroke-width="1.0"/><line x1="377.5" y1="1140.63" x2="2289.7" y2="1140.63" stroke="rgba(0,0,0,.1)" stroke-width="1.0"/><line x1="377.5" y1="1116.30" x2="2289.7" y2="1116.30" stroke="rgba(0,0,0,.1)" stroke-width="1.0"/><line x1="377.5" y1="1091.97" x2="2289.7" y2="1091.97" stroke="rgba(0,0,0,.1)" stroke-width="1.0"/><line x1="377.5" y1="1067.63" x2="2289.7" y2="1067.63" stroke="rgba(0,0,0,.1)" stroke-width="1.0"/><line x1="377.5" y1="1043.30" x2="2289.7" y2="1043.30" stroke="rgba(0,0,0,.1)" stroke-width="1.0"/><line x1="377.5" y1="1018.97" x2="2289.7" y2="1018.97" stroke="rgba(0,0,0,.1)" stroke-width="1.0"/><line x1="377.5" y1="994.63" x2="2289.7" y2="994.63" stroke="rgba(0,0,0,.1)" stroke-width="1.0"/><line x1="377.5" y1="970.30" x2="2289.7" y2="970.30" stroke="rgba(0,0,0,.1)" stroke-width="1.0"/><line x1="385.50" y1="970.3" x2="385.50" y2="1197.3" stroke="rgba(0,0,0,.1)" stroke-width="1.0"/><line x1="766.34" y1="970.3" x2="766.34" y2="1197.3" stroke="rgba(0,0,0,.1)" stroke-width="1.0"/><line x1="1147.18" y1="970.3" x2="1147.18" y2="1197.3" stroke="rgba(0,0,0,.1)" stroke-width="1.0"/><line x1="1528.02" y1="970.3" x2="1528.02" y2="1197.3" stroke="rgba(0,0,0,.1)" stroke-width="1.0"/><line x1="1908.86" y1="970.3" x2="1908.86" y2="1197.3" stroke="rgba(0,0,0,.1)" stroke-width="1.0"/><line x1="2289.70" y1="970.3" x2="2289.70" y2="1197.3" stroke="rgba(0,0,0,.1)" stroke-width="1.0"/><line x1="385.5" y1="970.3" x2="385.5" y2="1189.3" stroke="rgba(0,0,0,.1)" stroke-width="1.0"/><line x1="385.5" y1="1189.3" x2="2289.7" y2="1189.3" stroke="rgba(0,0,0,.1)" stroke-width="1.0"/><path d="M385.50,972.25 C537.84,1050.89 605.02,1128.40 766.34,1168.86 C909.70,1189.30 994.84,1165.26 1147.18,1163.26 C1299.51,1161.27 1375.70,1157.96 1528.02,1158.88 C1680.37,1159.81 1756.52,1164.33 1908.86,1167.89 C2061.19,1171.44 2137.36,1173.14 2289.70,1176.65 L2289.70,1189.3 L385.50,1189.3 Z" fill="rgba(25,118,210,.1)"/><path d="M385.50,972.98 C537.84,1056.59 603.99,1138.17 766.34,1182.00 C908.67,1189.30 994.94,1183.07 1147.18,1178.59 C1299.61,1174.11 1375.67,1159.81 1528.02,1159.61 C1680.35,1159.42 1756.44,1174.07 1908.86,1177.62 C2061.11,1181.17 2137.36,1177.47 2289.70,1177.38 L2289.70,1189.3 L385.50,1189.3 Z" fill="rgba(76,175,80,.1)"/><path d="M385.50,972.98 C537.84,1056.59 603.99,1138.17 766.34,1182.00 C908.67,1189.30 994.94,1183.07 1147.18,1178.59 C1299.61,1174.11 1375.67,1159.81 1528.02,1159.61 C1680.35,1159.42 1756.44,1174.07 1908.86,1177.62 C2061.11,1181.17 2137.36,1177.47 2289.70,1177.38" fill="none" stroke="#4caf50" stroke-width="3"/><path d="M385.50,972.25 C537.84,1050.89 605.02,1128.40 766.34,1168.86 C909.70,1189.30 994.84,1165.26 1147.18,1163.26 C1299.51,1161.27 1375.70,1157.96 1528.02,1158.88 C1680.37,1159.81 1756.52,1164.33 1908.86,1167.89 C2061.19,1171.44 2137.36,1173.14 2289.70,1176.65" fill="none" stroke="#1976d2" stroke-width="3"/><circle cx="385.50" cy="972.98" r="3" fill="rgba(76,175,80,.1)" stroke="#4caf50" stroke-width="1"/><circle cx="766.34" cy="1182.00" r="3" fill="rgba(76,175,80,.1)" stroke="#4caf50" stroke-width="1"/><circle cx="1147.18" cy="1178.59" r="3" fill="rgba(76,175,80,.1)" stroke="#4caf50" stroke-width="1"/><circle cx="1528.02" cy="1159.61" r="3" fill="rgba(76,175,80,.1)" stroke="#4caf50" stroke-width="1"/><circle cx="1908.86" cy="1177.62" r="3" fill="rgba(76,175,80,.1)" stroke="#4caf50" stroke-width="1"/><circle cx="2289.70" cy="1177.38" r="3" fill="rgba(76,175,80,.1)" stroke="#4caf50" stroke-width="1"/><circle cx="385.50" cy="972.25" r="3" fill="rgba(25,118,210,.1)" stroke="#1976d2" stroke-width="1"/><circle cx="766.34" cy="1168.86" r="3" fill="rgba(25,118,210,.1)" stroke="#1976d2" stroke-width="1"/><circle cx="1147.18" cy="1163.26" r="3" fill="rgba(25,118,210,.1)" stroke="#1976d2" stroke-width="1"/><circle cx="1528.02" cy="1158.88" r="3" fill="rgba(25,118,210,.1)" stroke="#1976d2" stroke-width="1"/><circle cx="1908.86" cy="1167.89" r="3" fill="rgba(25,118,210,.1)" stroke="#1976d2" stroke-width="1"/><circle cx="2289.70" cy="1176.65" r="3" fill="rgba(25,118,210,.1)" stroke="#1976d2" stroke-width="1"/><rect x="1244.6" y="947.8" width="40" height="12" fill="rgba(25,118,210,.1)" stroke="#1976d2" stroke-width="3"/><rect x="1330.5" y="947.8" width="40" height="12" fill="rgba(76,175,80,.1)" stroke="#4caf50" stroke-width="3"/><line x1="2457.40" y1="948.4" x2="2457.40" y2="1197.3" stroke="rgba(0,0,0,.1)" stroke-width="1.0"/><line x1="2580.84" y1="948.4" x2="2580.84" y2="1197.3" stroke="rgba(0,0,0,.1)" stroke-width="1.0"/><line x1="2704.29" y1="948.4" x2="2704.29" y2="1197.3" stroke="rgba(0,0,0,.1)" stroke-width="1.0"/><line x1="2827.73" y1="948.4" x2="2827.73" y2="1197.3" stroke="rgba(0,0,0,.1)" stroke-width="1.0"/><line x1="2951.17" y1="948.4" x2="2951.17" y2="1197.3" stroke="rgba(0,0,0,.1)" stroke-width="1.0"/><line x1="3074.61" y1="948.4" x2="3074.61" y2="1197.3" stroke="rgba(0,0,0,.1)" stroke-width="1.0"/><line x1="3198.06" y1="948.4" x2="3198.06" y2="1197.3" stroke="rgba(0,0,0,.1)" stroke-width="1.0"/><line x1="3321.50" y1="948.4" x2="3321.50" y2="1197.3" stroke="rgba(0,0,0,.1)" stroke-width="1.0"/><line x1="2449.4" y1="948.40" x2="3321.5" y2="948.40" stroke="rgba(0,0,0,.1)" stroke-width="1.0"/><line x1="2449.4" y1="1028.70" x2="3321.5" y2="1028.70" stroke="rgba(0,0,0,.1)" stroke-width="1.0"/><line x1="2449.4" y1="1109.00" x2="3321.5" y2="1109.00" stroke="rgba(0,0,0,.1)" stroke-width="1.0"/><line x1="2449.4" y1="1189.30" x2="3321.5" y2="1189.30" stroke="rgba(0,0,0,.1)" stroke-width="1.0"/><line x1="2457.4" y1="948.4" x2="2457.4" y2="1189.3" stroke="rgba(0,0,0,.1)" stroke-width="1.0"/><line x1="2457.4" y1="1189.3" x2="3321.5" y2="1189.3" stroke="rgba(0,0,0,.1)" stroke-width="1.0"/><rect x="2457.4" y="959.64" width="834.29" height="57.82" fill="#1976d2"/><rect x="2457.4" y="1039.94" width="64.56" height="57.82" fill="#4caf50"/><rect x="2457.4" y="1120.24" width="6.60" height="57.82" fill="#ff9800"/></svg>
<div style="position:absolute;left:0;top:0;width:3435px;height:0;will-change:transform">
<div style="position:absolute;top:1183.04px;font-size:12px;line-height:1;font-weight:normal;color:#666;white-space:pre;right:3061.20px;">$0</div>
<div style="position:absolute;top:1158.71px;font-size:12px;line-height:1;font-weight:normal;color:#666;white-space:pre;right:3061.20px;">$1000</div>
<div style="position:absolute;top:1134.38px;font-size:12px;line-height:1;font-weight:normal;color:#666;white-space:pre;right:3061.20px;">$2000</div>
<div style="position:absolute;top:1110.04px;font-size:12px;line-height:1;font-weight:normal;color:#666;white-space:pre;right:3061.20px;">$3000</div>
<div style="position:absolute;top:1085.71px;font-size:12px;line-height:1;font-weight:normal;color:#666;white-space:pre;right:3061.20px;">$4000</div>
<div style="position:absolute;top:1061.38px;font-size:12px;line-height:1;font-weight:normal;color:#666;white-space:pre;right:3061.20px;">$5000</div>
<div style="position:absolute;top:1037.04px;font-size:12px;line-height:1;font-weight:normal;color:#666;white-space:pre;right:3061.20px;">$6000</div>
<div style="position:absolute;top:1012.71px;font-size:12px;line-height:1;font-weight:normal;color:#666;white-space:pre;right:3061.20px;">$7000</div>
<div style="position:absolute;top:988.38px;font-size:12px;line-height:1;font-weight:normal;color:#666;white-space:pre;right:3061.20px;">$8000</div>
<div style="position:absolute;top:964.04px;font-size:12px;line-height:1;font-weight:normal;color:#666;white-space:pre;right:3061.20px;">$9000</div>
<div style="position:absolute;top:1200.84px;font-size:12px;line-height:1;font-weight:normal;color:#666;white-space:pre;left:-614.50px;width:2000px;text-align:center;">Jan 2</div>
<div style="position:absolute;top:1200.84px;font-size:12px;line-height:1;font-weight:normal;color:#666;white-space:pre;left:-233.66px;width:2000px;text-align:center;">Jan 3</div>
<div style="position:absolute;top:1200.84px;font-size:12px;line-height:1;font-weight:normal;color:#666;white-space:pre;left:147.18px;width:2000px;text-align:center;">Jan 4</div>
<div style="position:absolute;top:1200.84px;font-size:12px;line-height:1;font-weight:normal;color:#666;white-space:pre;left:528.02px;width:2000px;text-align:center;">Jan 7</div>
<div style="position:absolute;top:1200.84px;font-size:12px;line-height:1;font-weight:normal;color:#666;white-space:pre;left:908.86px;width:2000px;text-align:center;">Jan 18</div>
<div style="position:absolute;top:1200.84px;font-size:12px;line-height:1;font-weight:normal;color:#666;white-space:pre;left:1289.70px;width:2000px;text-align:center;">Jan 19</div>
<div style="position:absolute;top:946.84px;font-size:12px;line-height:1;font-weight:normal;color:#666;white-space:pre;left:1290.7px;">Sales</div>
<div style="position:absolute;top:946.84px;font-size:12px;line-height:1;font-weight:normal;color:#666;white-space:pre;left:1377px;">Profit</div>
<div style="position:absolute;top:981.99px;font-size:12px;line-height:1;font-weight:normal;color:#666;white-space:pre;right:989.50px;">Cash</div>
<div style="position:absolute;top:1062.29px;font-size:12px;line-height:1;font-weight:normal;color:#666;white-space:pre;right:989.50px;">Mastercard</div>
<div style="position:absolute;top:1142.59px;font-size:12px;line-height:1;font-weight:normal;color:#666;white-space:pre;right:989.50px;">Discover</div>
<div style="position:absolute;top:1200.84px;font-size:12px;line-height:1;font-weight:normal;color:#666;white-space:pre;left:1457.40px;width:2000px;text-align:center;">$0</div>
<div style="position:absolute;top:1200.84px;font-size:12px;line-height:1;font-weight:normal;color:#666;white-space:pre;left:1580.84px;width:2000px;text-align:center;">$2000</div>
<div style="position:absolute;top:1200.84px;font-size:12px;line-height:1;font-weight:normal;color:#666;white-space:pre;left:1704.29px;width:2000px;text-align:center;">$4000</div>
<div style="position:absolute;top:1200.84px;font-size:12px;line-height:1;font-weight:normal;color:#666;white-space:pre;left:1827.73px;width:2000px;text-align:center;">$6000</div>
<div style="position:absolute;top:1200.84px;font-size:12px;line-height:1;font-weight:normal;color:#666;white-space:pre;left:1951.17px;width:2000px;text-align:center;">$8000</div>
<div style="position:absolute;top:1200.84px;font-size:12px;line-height:1;font-weight:normal;color:#666;white-space:pre;left:2074.61px;width:2000px;text-align:center;">$10000</div>
<div style="position:absolute;top:1200.84px;font-size:12px;line-height:1;font-weight:normal;color:#666;white-space:pre;left:2198.06px;width:2000px;text-align:center;">$12000</div>
<div style="position:absolute;top:1200.84px;font-size:12px;line-height:1;font-weight:normal;color:#666;white-space:pre;left:2321.50px;width:2000px;text-align:center;">$14000</div>
</div>
<div style="position:absolute;left:256px;top:0px;width:3179px;height:69px;background:#fff"></div>
<div style="position:absolute;left:256px;top:69px;width:3172px;height:1px;background:#e2e8f0"></div>
<div style="position:absolute;top:29.20px;font-size:15px;line-height:1;font-weight:normal;color:#64748b;white-space:pre;transform:scaleX(1.0560);transform-origin:0 50%;left:280.3px;">Welcome back,</div>
<div style="position:absolute;top:29.20px;font-size:15px;line-height:1;font-weight:bold;color:#0f172a;white-space:pre;transform:scaleX(0.9743);transform-origin:0 50%;left:393.6px;">Kevin</div>
<div style="position:absolute;left:3105px;top:18px;width:166px;height:38.5px;background:#eff6ff;border:1px solid #dbeafe;border-radius:20px"></div>
<svg style="position:absolute;left:3120.2px;top:30.8px;" width="14.5" height="14.5" viewBox="0 0 16 16" fill="#1565c0"><path d="M8 16s6-5.686 6-10A6 6 0 0 0 2 6c0 4.314 6 10 6 10m0-7a3 3 0 1 1 0-6 3 3 0 0 1 0 6"/></svg>
<div style="position:absolute;top:30.57px;font-size:13.5px;line-height:1;font-weight:bold;color:#1565c0;white-space:pre;transform:scaleX(0.9802);transform-origin:0 50%;left:3143px;">Major League Tire</div>
<div style="position:absolute;left:3283px;top:15px;width:121px;height:46px;background:#fff;border:1px solid #e2e8f0;border-radius:23px"></div>
<div style="position:absolute;left:3290px;top:22px;width:32px;height:32px;border-radius:50%;background:linear-gradient(135deg,#1976d2,#0d47a1)"></div>
<div style="position:absolute;top:31.62px;font-size:12.5px;line-height:1;font-weight:bold;color:#fff;white-space:pre;left:2306.00px;width:2000px;text-align:center;">KL</div>
<div style="position:absolute;top:30.90px;font-size:13px;line-height:1;font-weight:normal;color:#334155;white-space:pre;-webkit-text-stroke:.3px currentColor;transform:scaleX(1.0609);transform-origin:0 50%;left:3332px;">Kevin</div>
<svg style="position:absolute;left:3377px;top:30.6px;" width="14" height="14" viewBox="0 0 16 16" fill="#8793a3"><path fill-rule="evenodd" d="M1.646 4.646a.5.5 0 0 1 .708 0L8 10.293l5.646-5.647a.5.5 0 0 1 .708.708l-6 6a.5.5 0 0 1-.708 0l-6-6a.5.5 0 0 1 0-.708"/></svg>
<div style="position:absolute;left:0px;top:0px;width:255px;height:1324px;background:#fff"></div>
<div style="position:absolute;left:255px;top:6px;width:1px;height:1324px;background:#e2e8f0"></div>
<div style="position:absolute;left:0px;top:91px;width:255px;height:1px;background:#eef2f7"></div>
<div style="position:absolute;left:16px;top:27px;width:42px;height:42px;border-radius:10.5px;background:linear-gradient(135deg,#1976d2,#0d47a1);box-shadow:0 5px 16px rgba(25,118,210,.3)"></div>
<svg style="position:absolute;left:27px;top:38px;" width="20" height="20" viewBox="0 0 16 16" fill="#fff"><path d="M16 4.5a4.5 4.5 0 0 1-1.703 3.526L13 5l2.959-1.11q.04.3.041.61"/><path d="M11.5 9c.653 0 1.273-.139 1.833-.39L12 5.5 11 3l3.826-1.53A4.5 4.5 0 0 0 7.29 6.092l-6.116 5.096a2.583 2.583 0 1 0 3.638 3.638L9.908 8.71A4.5 4.5 0 0 0 11.5 9m-1.292-4.361-.596.893.809-.27a.25.25 0 0 1 .287.377l-.596.893.809-.27.158.475-1.5.5a.25.25 0 0 1-.287-.376l.596-.893-.809.27a.25.25 0 0 1-.287-.377l.596-.893-.809.27-.158-.475 1.5-.5a.25.25 0 0 1 .287.376M3 14a1 1 0 1 1 0-2 1 1 0 0 1 0 2"/></svg>
<div style="position:absolute;top:31.16px;font-size:17.3px;line-height:1;font-weight:bold;color:#0f172a;white-space:pre;-webkit-text-stroke:0.35px currentColor;transform:scaleX(1.0826);transform-origin:0 50%;left:69.8px;">Auto<span style="color:#1976d2">Sync</span></div>
<div style="position:absolute;top:56.86px;font-size:10.8px;line-height:1;font-weight:normal;color:#94a3b8;white-space:pre;transform:scaleX(1.0654);transform-origin:0 50%;left:70px;">Shop Manager</div>
<div style="position:absolute;left:8px;top:107.8px;width:235px;height:221.72px;background:#f8fafc;border-radius:12px"></div>
<div style="position:absolute;top:124.60px;font-size:10.4px;line-height:1;font-weight:bold;color:#94a3b8;white-space:pre;transform:scaleX(1.0051);transform-origin:0 50%;left:24.2px;">CORE</div>
<svg style="position:absolute;left:27.3px;top:155.86999999999998px;" width="17.4" height="17.4" viewBox="0 0 16 16" fill="#94a3b8"><path d="M6 1H1v14h5zm9 0h-5v5h5zm0 9v5h-5v-5zM0 1a1 1 0 0 1 1-1h5a1 1 0 0 1 1 1v14a1 1 0 0 1-1 1H1a1 1 0 0 1-1-1zm9 0a1 1 0 0 1 1-1h5a1 1 0 0 1 1 1v5a1 1 0 0 1-1 1h-5a1 1 0 0 1-1-1zm1 8a1 1 0 0 0-1 1v5a1 1 0 0 0 1 1h5a1 1 0 0 0 1-1v-5a1 1 0 0 0-1-1z"/></svg>
<div style="position:absolute;top:157.97px;font-size:14.3px;line-height:1;font-weight:normal;color:#475569;white-space:pre;-webkit-text-stroke:.3px currentColor;transform:scaleX(0.9606);transform-origin:0 50%;left:56.3px;">Dashboard</div>
<svg style="position:absolute;left:27.3px;top:201.20000000000002px;" width="17.4" height="17.4" viewBox="0 0 16 16" fill="#94a3b8"><path fill-rule="evenodd" d="M10.854 7.146a.5.5 0 0 1 0 .708l-3 3a.5.5 0 0 1-.708 0l-1.5-1.5a.5.5 0 1 1 .708-.708L7.5 9.793l2.646-2.647a.5.5 0 0 1 .708 0"/><path d="M4 1.5H3a2 2 0 0 0-2 2V14a2 2 0 0 0 2 2h10a2 2 0 0 0 2-2V3.5a2 2 0 0 0-2-2h-1v1h1a1 1 0 0 1 1 1V14a1 1 0 0 1-1 1H3a1 1 0 0 1-1-1V3.5a1 1 0 0 1 1-1h1z"/><path d="M9.5 1a.5.5 0 0 1 .5.5v1a.5.5 0 0 1-.5.5h-3a.5.5 0 0 1-.5-.5v-1a.5.5 0 0 1 .5-.5zm-3-1A1.5 1.5 0 0 0 5 1.5v1A1.5 1.5 0 0 0 6.5 4h3A1.5 1.5 0 0 0 11 2.5v-1A1.5 1.5 0 0 0 9.5 0z"/></svg>
<div style="position:absolute;top:203.30px;font-size:14.3px;line-height:1;font-weight:normal;color:#475569;white-space:pre;-webkit-text-stroke:.3px currentColor;transform:scaleX(0.9692);transform-origin:0 50%;left:56.3px;">Work Orders</div>
<svg style="position:absolute;left:27.3px;top:246.53px;" width="17.4" height="17.4" viewBox="0 0 16 16" fill="#94a3b8"><path d="M15 14s1 0 1-1-1-4-5-4-5 3-5 4 1 1 1 1zm-7.978-1L7 12.996c.001-.264.167-1.03.76-1.72C8.312 10.629 9.282 10 11 10c1.717 0 2.687.63 3.24 1.276.593.69.758 1.457.76 1.72l-.008.002-.014.002zM11 7a2 2 0 1 0 0-4 2 2 0 0 0 0 4m3-2a3 3 0 1 1-6 0 3 3 0 0 1 6 0M6.936 9.28a6 6 0 0 0-1.23-.247A7 7 0 0 0 5 9c-4 0-5 3-5 4q0 1 1 1h4.216A2.24 2.24 0 0 1 5 13c0-1.01.377-2.042 1.09-2.904.243-.294.526-.569.846-.816M4.92 10A5.5 5.5 0 0 0 4 13H1c0-.26.164-1.03.76-1.724.545-.636 1.492-1.256 3.16-1.275ZM1.5 5.5a3 3 0 1 1 6 0 3 3 0 0 1-6 0m3-2a2 2 0 1 0 0 4 2 2 0 0 0 0-4"/></svg>
<div style="position:absolute;top:248.63px;font-size:14.3px;line-height:1;font-weight:normal;color:#475569;white-space:pre;-webkit-text-stroke:.3px currentColor;transform:scaleX(0.9720);transform-origin:0 50%;left:56.3px;">Customers</div>
<svg style="position:absolute;left:27.3px;top:291.86000000000007px;" width="17.4" height="17.4" viewBox="0 0 16 16" fill="#94a3b8"><path d="M14 0H2a2 2 0 0 0-2 2v12a2 2 0 0 0 2 2h12a2 2 0 0 0 2-2V2a2 2 0 0 0-2-2M1 3.857C1 3.384 1.448 3 2 3h12c.552 0 1 .384 1 .857v10.286c0 .473-.448.857-1 .857H2c-.552 0-1-.384-1-.857z"/><path d="M6.5 7a1 1 0 1 0 0-2 1 1 0 0 0 0 2m3 0a1 1 0 1 0 0-2 1 1 0 0 0 0 2m3 0a1 1 0 1 0 0-2 1 1 0 0 0 0 2m-9 3a1 1 0 1 0 0-2 1 1 0 0 0 0 2m3 0a1 1 0 1 0 0-2 1 1 0 0 0 0 2m3 0a1 1 0 1 0 0-2 1 1 0 0 0 0 2m3 0a1 1 0 1 0 0-2 1 1 0 0 0 0 2m-9 3a1 1 0 1 0 0-2 1 1 0 0 0 0 2m3 0a1 1 0 1 0 0-2 1 1 0 0 0 0 2m3 0a1 1 0 1 0 0-2 1 1 0 0 0 0 2"/></svg>
<div style="position:absolute;top:293.96px;font-size:14.3px;line-height:1;font-weight:normal;color:#475569;white-space:pre;-webkit-text-stroke:.3px currentColor;transform:scaleX(0.9892);transform-origin:0 50%;left:56.3px;">Appointments</div>
<div style="position:absolute;left:8px;top:343px;width:235px;height:221.72px;background:#f8fafc;border-radius:12px"></div>
<div style="position:absolute;top:359.80px;font-size:10.4px;line-height:1;font-weight:bold;color:#94a3b8;white-space:pre;transform:scaleX(1.0574);transform-origin:0 50%;left:24.2px;">OPERATIONS</div>
<svg style="position:absolute;left:27.3px;top:391.07000000000005px;" width="17.4" height="17.4" viewBox="0 0 16 16" fill="#94a3b8"><path d="M4 2.5a.5.5 0 0 1 .5-.5h1a.5.5 0 0 1 .5.5v1a.5.5 0 0 1-.5.5h-1a.5.5 0 0 1-.5-.5zm3 0a.5.5 0 0 1 .5-.5h1a.5.5 0 0 1 .5.5v1a.5.5 0 0 1-.5.5h-1a.5.5 0 0 1-.5-.5zm3.5-.5a.5.5 0 0 0-.5.5v1a.5.5 0 0 0 .5.5h1a.5.5 0 0 0 .5-.5v-1a.5.5 0 0 0-.5-.5zM4 5.5a.5.5 0 0 1 .5-.5h1a.5.5 0 0 1 .5.5v1a.5.5 0 0 1-.5.5h-1a.5.5 0 0 1-.5-.5zM7.5 5a.5.5 0 0 0-.5.5v1a.5.5 0 0 0 .5.5h1a.5.5 0 0 0 .5-.5v-1a.5.5 0 0 0-.5-.5zm2.5.5a.5.5 0 0 1 .5-.5h1a.5.5 0 0 1 .5.5v1a.5.5 0 0 1-.5.5h-1a.5.5 0 0 1-.5-.5zM4.5 8a.5.5 0 0 0-.5.5v1a.5.5 0 0 0 .5.5h1a.5.5 0 0 0 .5-.5v-1a.5.5 0 0 0-.5-.5zm2.5.5a.5.5 0 0 1 .5-.5h1a.5.5 0 0 1 .5.5v1a.5.5 0 0 1-.5.5h-1a.5.5 0 0 1-.5-.5zm3.5-.5a.5.5 0 0 0-.5.5v1a.5.5 0 0 0 .5.5h1a.5.5 0 0 0 .5-.5v-1a.5.5 0 0 0-.5-.5z"/><path d="M2 1a1 1 0 0 1 1-1h10a1 1 0 0 1 1 1v14a1 1 0 0 1-1 1H3a1 1 0 0 1-1-1zm11 0H3v14h3v-2.5a.5.5 0 0 1 .5-.5h3a.5.5 0 0 1 .5.5V15h3z"/></svg>
<div style="position:absolute;top:393.17px;font-size:14.3px;line-height:1;font-weight:normal;color:#475569;white-space:pre;-webkit-text-stroke:.3px currentColor;transform:scaleX(0.9738);transform-origin:0 50%;left:56.3px;">Vendors</div>
<svg style="position:absolute;left:27.3px;top:436.40000000000003px;" width="17.4" height="17.4" viewBox="0 0 16 16" fill="#94a3b8"><path d="M8.186 1.113a.5.5 0 0 0-.372 0L1.846 3.5 8 5.961 14.154 3.5zM15 4.239l-6.5 2.6v7.922l6.5-2.6V4.24zM7.5 14.762V6.838L1 4.239v7.923zM7.443.184a1.5 1.5 0 0 1 1.114 0l7.129 2.852A.5.5 0 0 1 16 3.5v8.662a1 1 0 0 1-.629.928l-7.185 2.874a.5.5 0 0 1-.372 0L.63 13.09a1 1 0 0 1-.63-.928V3.5a.5.5 0 0 1 .314-.464z"/></svg>
<div style="position:absolute;top:438.50px;font-size:14.3px;line-height:1;font-weight:normal;color:#475569;white-space:pre;-webkit-text-stroke:.3px currentColor;transform:scaleX(0.9859);transform-origin:0 50%;left:56.3px;">Inventory</div>
<svg style="position:absolute;left:27.3px;top:481.7300000000001px;" width="17.4" height="17.4" viewBox="0 0 16 16" fill="#94a3b8"><path d="M0 1.5A.5.5 0 0 1 .5 1H2a.5.5 0 0 1 .485.379L2.89 3H14.5a.5.5 0 0 1 .491.592l-1.5 8A.5.5 0 0 1 13 12H4a.5.5 0 0 1-.491-.408L2.01 3.607 1.61 2H.5a.5.5 0 0 1-.5-.5M3.102 4l1.313 7h8.17l1.313-7zM5 12a2 2 0 1 0 0 4 2 2 0 0 0 0-4m7 0a2 2 0 1 0 0 4 2 2 0 0 0 0-4m-7 1a1 1 0 1 1 0 2 1 1 0 0 1 0-2m7 0a1 1 0 1 1 0 2 1 1 0 0 1 0-2"/></svg>
<div style="position:absolute;top:483.83px;font-size:14.3px;line-height:1;font-weight:normal;color:#475569;white-space:pre;-webkit-text-stroke:.3px currentColor;transform:scaleX(0.9646);transform-origin:0 50%;left:56.3px;">Parts Ordering</div>
<div style="position:absolute;left:14px;top:513.9599999999999px;width:223px;height:45.9px;background:#1976d2;border-radius:8px;box-shadow:0 4px 12px rgba(25,118,210,.3)"></div>
<svg style="position:absolute;left:27.3px;top:527.06px;" width="17.4" height="17.4" viewBox="0 0 16 16" fill="#fff"><path d="M4 11H2v3h2zm5-4H7v7h2zm5-5v12h-2V2zm-2-1a1 1 0 0 0-1 1v12a1 1 0 0 0 1 1h2a1 1 0 0 0 1-1V2a1 1 0 0 0-1-1zM6 7a1 1 0 0 1 1-1h2a1 1 0 0 1 1 1v7a1 1 0 0 1-1 1H7a1 1 0 0 1-1-1zm-5 4a1 1 0 0 1 1-1h2a1 1 0 0 1 1 1v3a1 1 0 0 1-1 1H2a1 1 0 0 1-1-1z"/></svg>
<div style="position:absolute;top:529.16px;font-size:14.3px;line-height:1;font-weight:normal;color:#fff;white-space:pre;-webkit-text-stroke:.3px currentColor;transform:scaleX(0.9526);transform-origin:0 50%;left:56.3px;">Reports</div>
<div style="position:absolute;left:8px;top:578.1px;width:235px;height:176.39000000000001px;background:#f8fafc;border-radius:12px"></div>
<div style="position:absolute;top:594.90px;font-size:10.4px;line-height:1;font-weight:bold;color:#94a3b8;white-space:pre;transform:scaleX(1.1061);transform-origin:0 50%;left:24.2px;">ADMIN</div>
<svg style="position:absolute;left:27.3px;top:626.17px;" width="17.4" height="17.4" viewBox="0 0 16 16" fill="#94a3b8"><path d="M12 1a1 1 0 0 1 1 1v12a1 1 0 0 1-1 1H4a1 1 0 0 1-1-1V2a1 1 0 0 1 1-1zM4 0a2 2 0 0 0-2 2v12a2 2 0 0 0 2 2h8a2 2 0 0 0 2-2V2a2 2 0 0 0-2-2z"/><path d="M4 2.5a.5.5 0 0 1 .5-.5h7a.5.5 0 0 1 .5.5v2a.5.5 0 0 1-.5.5h-7a.5.5 0 0 1-.5-.5zm0 4a.5.5 0 0 1 .5-.5h1a.5.5 0 0 1 .5.5v1a.5.5 0 0 1-.5.5h-1a.5.5 0 0 1-.5-.5zm0 3a.5.5 0 0 1 .5-.5h1a.5.5 0 0 1 .5.5v1a.5.5 0 0 1-.5.5h-1a.5.5 0 0 1-.5-.5zm0 3a.5.5 0 0 1 .5-.5h1a.5.5 0 0 1 .5.5v1a.5.5 0 0 1-.5.5h-1a.5.5 0 0 1-.5-.5zm3-6a.5.5 0 0 1 .5-.5h1a.5.5 0 0 1 .5.5v1a.5.5 0 0 1-.5.5h-1a.5.5 0 0 1-.5-.5zm0 3a.5.5 0 0 1 .5-.5h1a.5.5 0 0 1 .5.5v1a.5.5 0 0 1-.5.5h-1a.5.5 0 0 1-.5-.5zm0 3a.5.5 0 0 1 .5-.5h1a.5.5 0 0 1 .5.5v1a.5.5 0 0 1-.5.5h-1a.5.5 0 0 1-.5-.5zm3-6a.5.5 0 0 1 .5-.5h1a.5.5 0 0 1 .5.5v1a.5.5 0 0 1-.5.5h-1a.5.5 0 0 1-.5-.5zm0 3a.5.5 0 0 1 .5-.5h1a.5.5 0 0 1 .5.5v4a.5.5 0 0 1-.5.5h-1a.5.5 0 0 1-.5-.5z"/></svg>
<div style="position:absolute;top:628.27px;font-size:14.3px;line-height:1;font-weight:normal;color:#475569;white-space:pre;-webkit-text-stroke:.3px currentColor;left:56.3px;">Accounting</div>
<svg style="position:absolute;left:27.3px;top:671.5px;" width="17.4" height="17.4" viewBox="0 0 16 16" fill="#94a3b8"><path d="M5.338 1.59a61 61 0 0 0-2.837.856.48.48 0 0 0-.328.39c-.554 4.157.726 7.19 2.253 9.188a10.7 10.7 0 0 0 2.287 2.233c.346.244.652.42.893.533q.18.085.293.118a1 1 0 0 0 .101.025 1 1 0 0 0 .1-.025q.114-.034.294-.118c.24-.113.547-.29.893-.533a10.7 10.7 0 0 0 2.287-2.233c1.527-1.997 2.807-5.031 2.253-9.188a.48.48 0 0 0-.328-.39c-.651-.213-1.75-.56-2.837-.855C9.552 1.29 8.531 1.067 8 1.067c-.53 0-1.552.223-2.662.524zM5.072.56C6.157.265 7.31 0 8 0s1.843.265 2.928.56c1.11.3 2.229.655 2.887.87a1.54 1.54 0 0 1 1.044 1.262c.596 4.477-.787 7.795-2.465 9.99a11.8 11.8 0 0 1-2.517 2.453 7 7 0 0 1-1.048.625c-.28.132-.581.24-.829.24s-.548-.108-.829-.24a7 7 0 0 1-1.048-.625 11.8 11.8 0 0 1-2.517-2.453C1.928 10.487.545 7.169 1.141 2.692A1.54 1.54 0 0 1 2.185 1.43 63 63 0 0 1 5.072.56"/><path d="M9.5 6.5a1.5 1.5 0 0 1-1 1.415l.385 1.99a.5.5 0 0 1-.491.595h-.788a.5.5 0 0 1-.49-.595l.384-1.99a1.5 1.5 0 1 1 2-1.415"/></svg>
<div style="position:absolute;top:673.60px;font-size:14.3px;line-height:1;font-weight:normal;color:#475569;white-space:pre;-webkit-text-stroke:.3px currentColor;transform:scaleX(0.9509);transform-origin:0 50%;left:56.3px;">Admin Panel</div>
<svg style="position:absolute;left:27.3px;top:716.8299999999999px;" width="17.4" height="17.4" viewBox="0 0 16 16" fill="#94a3b8"><path d="M8 4.754a3.246 3.246 0 1 0 0 6.492 3.246 3.246 0 0 0 0-6.492M5.754 8a2.246 2.246 0 1 1 4.492 0 2.246 2.246 0 0 1-4.492 0"/><path d="M9.796 1.343c-.527-1.79-3.065-1.79-3.592 0l-.094.319a.873.873 0 0 1-1.255.52l-.292-.16c-1.64-.892-3.433.902-2.54 2.541l.159.292a.873.873 0 0 1-.52 1.255l-.319.094c-1.79.527-1.79 3.065 0 3.592l.319.094a.873.873 0 0 1 .52 1.255l-.16.292c-.892 1.64.901 3.434 2.541 2.54l.292-.159a.873.873 0 0 1 1.255.52l.094.319c.527 1.79 3.065 1.79 3.592 0l.094-.319a.873.873 0 0 1 1.255-.52l.292.16c1.64.893 3.434-.902 2.54-2.541l-.159-.292a.873.873 0 0 1 .52-1.255l.319-.094c1.79-.527 1.79-3.065 0-3.592l-.319-.094a.873.873 0 0 1-.52-1.255l.16-.292c.893-1.64-.902-3.433-2.541-2.54l-.292.159a.873.873 0 0 1-1.255-.52zm-2.633.283c.246-.835 1.428-.835 1.674 0l.094.319a1.873 1.873 0 0 0 2.693 1.115l.291-.16c.764-.415 1.6.42 1.184 1.185l-.159.292a1.873 1.873 0 0 0 1.116 2.692l.318.094c.835.246.835 1.428 0 1.674l-.319.094a1.873 1.873 0 0 0-1.115 2.693l.16.291c.415.764-.42 1.6-1.185 1.184l-.291-.159a1.873 1.873 0 0 0-2.693 1.116l-.094.318c-.246.835-1.428.835-1.674 0l-.094-.319a1.873 1.873 0 0 0-2.692-1.115l-.292.16c-.764.415-1.6-.42-1.184-1.185l.159-.291A1.873 1.873 0 0 0 1.945 8.93l-.319-.094c-.835-.246-.835-1.428 0-1.674l.319-.094A1.873 1.873 0 0 0 3.06 4.377l-.16-.292c-.415-.764.42-1.6 1.185-1.184l.292.159a1.873 1.873 0 0 0 2.692-1.115z"/></svg>
<div style="position:absolute;top:718.93px;font-size:14.3px;line-height:1;font-weight:normal;color:#475569;white-space:pre;-webkit-text-stroke:.3px currentColor;transform:scaleX(0.9715);transform-origin:0 50%;left:56.3px;">Settings</div>
<div style="position:absolute;left:0px;top:1260px;width:255px;height:1px;background:#eef2f7"></div>
<div style="position:absolute;left:8px;top:1273px;width:235px;height:37.6px;background:#f8fafc;border-radius:9px"></div>
<div style="position:absolute;left:19.7px;top:1287.6px;width:8.4px;height:8.4px;background:#22c55e;border-radius:50%;box-shadow:0 0 7px rgba(34,197,94,.55)"></div>
<div style="position:absolute;top:1285.04px;font-size:13.3px;line-height:1;font-weight:normal;color:#64748b;white-space:pre;-webkit-text-stroke:.3px currentColor;transform:scaleX(0.9599);transform-origin:0 50%;left:35.8px;">Online</div>
<div style="position:absolute;top:1286.40px;font-size:11.7px;line-height:1;font-weight:bold;color:#94a3b8;white-space:pre;transform:scaleX(1.0538);transform-origin:0 50%;left:207px;">v4.0</div>
<div style="position:absolute;left:0px;top:0px;width:3435px;height:5px;background:#fff"></div>
<div style="position:absolute;left:0px;top:5px;width:3435px;height:1px;background:#dfe2e0"></div>
<div style="position:absolute;left:3428px;top:6px;width:7px;height:1324px;background:#f0f3f9"></div>
<div style="position:absolute;left:3428.4px;top:51.5px;width:6.6px;height:602.5px;background:#c9d3e0;border-radius:4px"></div>
<div style="position:absolute;left:0px;top:1323px;width:3435px;height:1px;background:#f4e6f1"></div>
</div></body></html>
